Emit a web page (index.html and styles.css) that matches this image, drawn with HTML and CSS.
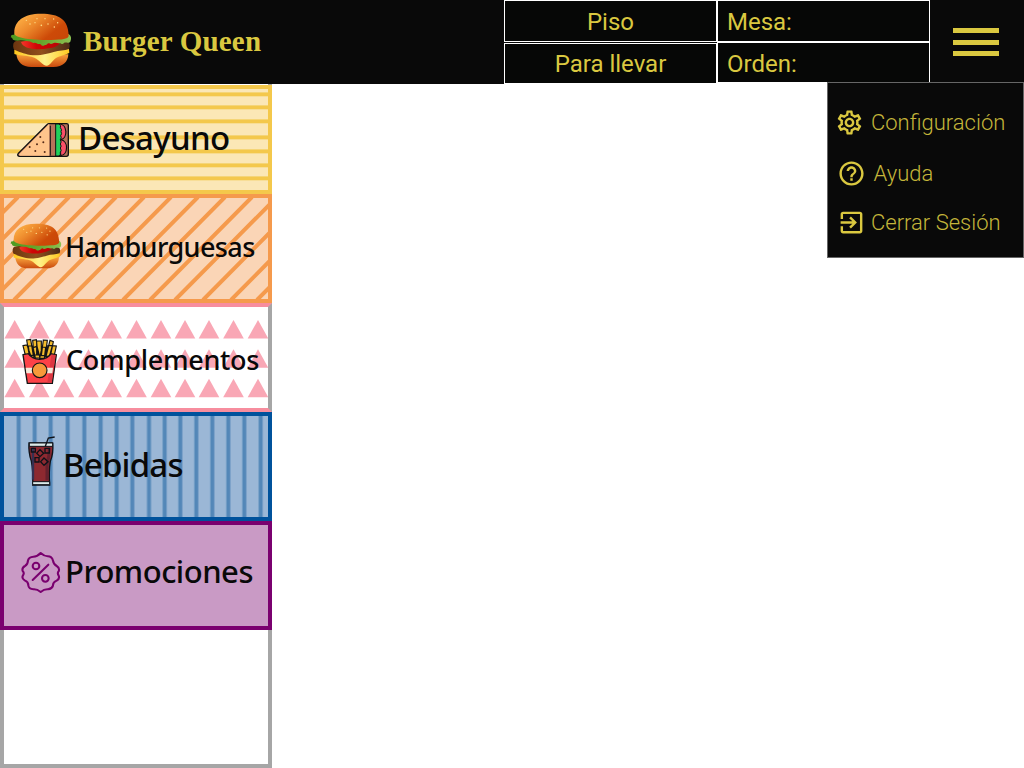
FILE: index.html
```html
<!DOCTYPE html>
<html lang="es">
<head>
<meta charset="utf-8">
<title>Burger Queen</title>
<link rel="stylesheet" href="styles.css">
</head>
<body>
<svg class="defs" width="0" height="0" aria-hidden="true">
  <defs>
    <linearGradient id="bun" x1="0" y1="0.2" x2="1" y2="0.8"><stop offset="0" stop-color="#ffb347"/><stop offset=".35" stop-color="#ed8a2c"/><stop offset=".75" stop-color="#cd4a08"/><stop offset="1" stop-color="#c94708"/></linearGradient>
    <linearGradient id="base" x1="0" y1="0" x2="0" y2="1"><stop offset="0" stop-color="#f7a13c"/><stop offset="1" stop-color="#c94a0e"/></linearGradient>
    <linearGradient id="leaf" x1="0" y1="0" x2="1" y2="0"><stop offset="0" stop-color="#4c9a20"/><stop offset=".5" stop-color="#66a52c"/><stop offset="1" stop-color="#8cc152"/></linearGradient>
    <linearGradient id="meat" x1="0" y1="0" x2="1" y2="0"><stop offset="0" stop-color="#6b3510"/><stop offset=".5" stop-color="#91501c"/><stop offset="1" stop-color="#4d2b17"/></linearGradient>
    <linearGradient id="cheese" x1="0" y1="0" x2="1" y2="0"><stop offset="0" stop-color="#ffc61c"/><stop offset=".55" stop-color="#fff18a"/><stop offset="1" stop-color="#ffca20"/></linearGradient>
    <linearGradient id="tomato" x1="0" y1="0" x2="1" y2="0"><stop offset="0" stop-color="#f6362a"/><stop offset=".4" stop-color="#cf0606"/><stop offset="1" stop-color="#b90505"/></linearGradient>
    <symbol id="burger" viewBox="30 40 186 164">
      <path fill="url(#base)" d="M49 164h156c-1 22-15 38-45 38H94c-28 0-42-15-45-38z"/>
      <path fill="url(#meat)" d="M40 133c2-10 15-12 30-10h125c14 2 17 13 12 25-8 14-35 16-66 19-40 3-79 0-92-10-8-6-11-15-9-24z"/>
      <path fill="url(#cheese)" d="M43 150c14 6 26 11 48 16 28 4 55-5 70-9 17-6 32-4 46-9l1 11c-8 6-29 9-40 16-11 8-19 24-28 23-12-1-21-17-37-24-23-8-48-5-60-11z"/>
      <path fill="url(#tomato)" d="M63 127c28-9 95-9 115-1 4 9-12 17-33 20-22 5-41 3-55 0-14-2-24-10-27-19z"/>
      <path fill="url(#leaf)" d="M34 106l8-1 4-11 60 8 100 1c8 6 9 13 5 23-7 7-14 0-19 4-6 7-9-2-15 1-6-1-9-3-16-1-6 3-9 4-13 1-6-3-7 6-12 5-5 1-4 3-9 2-3 0-4-5-8-5-7 1-8-4-15-4-9 3-11-5-19-4-9 0-13-3-22-3-10 2-16 2-24-2l-3-6-4-1 2-5z"/>
      <path fill="url(#bun)" d="M43 99c0-35 28-57 80-57 56 0 81 18 83 64 1 10-12 14-39 14-33 2-81 1-110-8-10-3-14-7-14-13z"/>
      <g fill="#ffe08a"><circle cx="79" cy="62" r="2"/><circle cx="90" cy="73" r="2.3"/><circle cx="111" cy="57" r="2"/><circle cx="105" cy="69" r="2"/><circle cx="124" cy="77" r="2.5"/><circle cx="135" cy="57" r="2"/><circle cx="144" cy="73" r="2.2"/><circle cx="161" cy="58" r="2"/><circle cx="173" cy="69" r="2.2"/><circle cx="163" cy="82" r="2.4"/></g>
    </symbol>
  </defs>
</svg>

<header class="topbar">
  <div class="brand">
    <svg class="brand-logo"><use href="#burger"/></svg>
    <h1 class="brand-name">Burger Queen</h1>
  </div>
  <div class="order">
    <div class="order-col modes">
      <div class="cell">Piso</div>
      <div class="cell">Para llevar</div>
    </div>
    <div class="order-col info">
      <div class="cell">Mesa:</div>
      <div class="cell">Orden:</div>
    </div>
  </div>
  <button class="burger-btn" aria-label="Menú"><i></i><i></i><i></i></button>
</header>

<main class="page">
  <nav class="sidebar">
    <a class="card breakfast">
      <svg class="pattern" viewBox="4 89 264 101">
        <g fill="#f5d577"><rect x="4" y="92" width="264" height="4.5"/><rect x="4" y="105" width="264" height="4.5"/><rect x="4" y="119" width="264" height="4.5"/><rect x="4" y="135" width="264" height="4.6"/><rect x="4" y="149" width="264" height="4.6"/><rect x="4" y="163" width="264" height="4.5"/><rect x="4" y="176" width="264" height="4.5"/></g>
        <g fill="#f4c84b"><rect x="4" y="93" width="264" height="3"/><rect x="4" y="106" width="264" height="3"/><rect x="4" y="120" width="264" height="3"/><rect x="4" y="136" width="264" height="3"/><rect x="4" y="150" width="264" height="3"/><rect x="4" y="164" width="264" height="3"/><rect x="4" y="177" width="264" height="3"/></g>
      </svg>
      <svg class="icon" viewBox="48 126 162 108">
        <path d="M146 131h54q5 0 5 5v87q0 6-6 6H58q-8-2-3-9l85-85q3-4 6-4z" fill="#b5735a" stroke="#111" stroke-width="4"/>
        <path d="M148 133v94H60q-5-1-2-5l84-85q3-4 6-4z" fill="#ffc58c"/>
        <path d="M151 137v90" stroke="#111" stroke-width="3"/>
        <path d="M178 132c25 1 26 43 4 47 24 3 23 45 0 48z" fill="#f94f68" stroke="#111" stroke-width="3.5"/>
        <path d="M167 132h10q8 5 4 11 6 6 2 12 4 6-1 12 4 6-1 12 5 7 0 13 5 7 0 12 5 8 0 13 2 7-4 11h-10z" fill="#1fd05c" stroke="#111" stroke-width="3"/>
        <g fill="#542b18"><circle cx="121" cy="171" r="3"/><circle cx="130" cy="187" r="3"/><circle cx="111" cy="193" r="3"/><circle cx="89" cy="201" r="3"/><circle cx="106" cy="213" r="3"/><circle cx="134" cy="216" r="3"/></g>
      </svg>
      <span class="label">Desayuno</span>
    </a>

    <a class="card burgers">
      <svg class="pattern" viewBox="4 198 264 101">
        <path fill="none" stroke="#f59a4c" stroke-width="4" d="M-84 300l102-103M-58 300l102-103M-33 300l102-103M-8 300l102-103M14 300l102-103M42 300l102-103M69 300l102-103M96 300l102-103M123 300l102-103M150 300l102-103M175 300l102-103M203 300l102-103M231 300l102-103M257 300l102-103"/>
      </svg>
      <svg class="icon"><use href="#burger"/></svg>
      <span class="label">Hamburguesas</span>
    </a>

    <a class="card sides">
      <svg class="pattern" viewBox="4 307 264 101">
        <defs><path id="tri" d="M0 0l10.3 18.5h-20.6z"/>
        <g id="row"><use href="#tri" x="14.7"/><use href="#tri" x="39.3"/><use href="#tri" x="64"/><use href="#tri" x="88.5"/><use href="#tri" x="111.7"/><use href="#tri" x="136.5"/><use href="#tri" x="161"/><use href="#tri" x="185"/><use href="#tri" x="209"/><use href="#tri" x="233.5"/><use href="#tri" x="258"/></g></defs>
        <g fill="#f9a7b5"><use href="#row" y="320"/><use href="#row" y="349.3"/><use href="#row" y="378.7"/></g>
      </svg>
      <svg class="icon" viewBox="63 114 111 141">
        <g fill="#f5bd2d" stroke="#151515" stroke-width="3.5">
          <path d="M69 137l12-2 12 34H77zM157 137l12 1-7 32h-14zM80 120l12-2 8 48H88zM150 121l10 4-9 44h-13zM98 121l11-2 5 46h-12zM130 120l12 1-6 46h-12zM110 123h14v42h-14zM85 138h12l5 36H90zM144 137h13l-8 34h-13zM99 143l12-4 9 35h-14zM126 141l11 1-4 33h-14z"/>
        </g>
        <path d="M69 164l16-3q10 16 34 17 25-1 34-17l16 3-12 86H82z" fill="#fd4248" stroke="#151515" stroke-width="4"/>
        <path d="M154 166l13-2-12 84h-13z" fill="#dc3742"/>
        <path d="M77 203h82l-2 17H79z" fill="#f3e8d9"/>
        <circle cx="119" cy="211" r="22" fill="#f7993a" stroke="#151515" stroke-width="3.5"/>
      </svg>
      <span class="label">Complementos</span>
    </a>

    <a class="card drinks">
      <svg class="pattern" viewBox="12 33 792 303" preserveAspectRatio="none">
        <path stroke="#78a0c8" stroke-width="15" d="M56 0v400M104 0v400M152 0v400M203 0v400M253 0v400M302 0v400M350 0v400M397 0v400M447 0v400M494 0v400M541 0v400M589 0v400M637 0v400M685 0v400M733 0v400M782 0v400"/>
        <path stroke="#5387b8" stroke-width="9" d="M56 0v400M104 0v400M152 0v400M203 0v400M253 0v400M302 0v400M350 0v400M397 0v400M447 0v400M494 0v400M541 0v400M589 0v400M637 0v400M685 0v400M733 0v400M782 0v400"/>
      </svg>
      <svg class="icon" viewBox="81 93 84 153">
        <path d="M87 114h71q3 30-7 55-5 30-2 71H98q2-42-4-72-9-25-7-54z" fill="#8d2930" stroke="#0e1219" stroke-width="4"/>
        <path d="M88 114h70v10H88zM98 230h51v9H98z" fill="#dceae9" stroke="#0e1219" stroke-width="3"/>
        <path d="M99 128v96" stroke="#353052" stroke-width="7"/><path d="M148 128q0 27-7 50v48" stroke="#65202d" stroke-width="9" fill="none"/>
        <path d="M136 124l9-25 19-3M94 130h12v11H94zM135 130h13v14h-13zM120 134l11 11-11 10-10-10zM132 159l12 11-12 11-10-11zM105 158h12v13h-12z" fill="none" stroke="#0e1219" stroke-width="4"/>
      </svg>
      <span class="label">Bebidas</span>
    </a>

    <a class="card promos">
      <svg class="icon" viewBox="60 108 123 129" fill="none" stroke="#7a006f" stroke-width="6.2" stroke-linecap="round" stroke-linejoin="round">
        <path d="M122 114q11 10 21 10c9 0 14 4 16 13q1 10 11 16 10 6 6 16-5 5 0 13 4 9-6 15-12 5-11 15-3 10-15 11-11-1-22 8-11-9-22-8-13-1-15-11 1-11-11-16-10-6-5-15 5-7-1-13-3-10 7-15 9-5 9-17 3-10 16-11 12 0 22-11z"/>
        <circle cx="108" cy="153" r="10"/><circle cx="136" cy="190" r="10"/><path d="M98 195l47-46"/>
      </svg>
      <span class="label">Promociones</span>
    </a>
  </nav>

  <div class="menu">
    <a class="menu-item config">
      <svg viewBox="0 0 24 24"><path d="M19.43 12.98c.04-.32.07-.64.07-.98 0-.34-.03-.66-.07-.98l2.11-1.65c.19-.15.24-.42.12-.64l-2-3.46c-.09-.16-.26-.25-.44-.25-.06 0-.12.01-.17.03l-2.49 1c-.52-.4-1.08-.73-1.69-.98l-.38-2.65C14.46 2.18 14.25 2 14 2h-4c-.25 0-.46.18-.49.42l-.38 2.65c-.61.25-1.17.59-1.69.98l-2.49-1c-.06-.02-.12-.03-.18-.03-.17 0-.34.09-.43.25l-2 3.46c-.13.22-.07.49.12.64l2.11 1.65c-.04.32-.07.65-.07.98 0 .33.03.66.07.98l-2.11 1.65c-.19.15-.24.42-.12.64l2 3.46c.09.16.26.25.44.25.06 0 .12-.01.17-.03l2.49-1c.52.4 1.08.73 1.69.98l.38 2.65c.03.24.24.42.49.42h4c.25 0 .46-.18.49-.42l.38-2.65c.61-.25 1.17-.59 1.69-.98l2.49 1c.06.02.12.03.18.03.17 0 .34-.09.43-.25l2-3.46c.12-.22.07-.49-.12-.64l-2.11-1.65zm-1.98-1.71c.04.31.05.52.05.73 0 .21-.02.43-.05.73l-.14 1.13.89.7 1.08.84-.7 1.21-1.27-.51-1.04-.42-.9.68c-.43.32-.84.56-1.25.73l-1.06.43-.16 1.13-.2 1.35h-1.4l-.19-1.35-.16-1.13-1.06-.43c-.43-.18-.83-.41-1.23-.71l-.91-.7-1.06.43-1.27.51-.7-1.21 1.08-.84.89-.7-.14-1.13c-.03-.31-.05-.54-.05-.74s.02-.43.05-.73l.14-1.13-.89-.7-1.08-.84.7-1.21 1.27.51 1.04.42.9-.68c.43-.32.84-.56 1.25-.73l1.06-.43.16-1.13.2-1.35h1.39l.19 1.35.16 1.13 1.06.43c.43.18.83.41 1.23.71l.91.7 1.06-.43 1.27-.51.7 1.21-1.07.85-.89.7.14 1.13zM12 8c-2.21 0-4 1.79-4 4s1.79 4 4 4 4-1.79 4-4-1.79-4-4-4zm0 6c-1.1 0-2-.9-2-2s.9-2 2-2 2 .9 2 2-.9 2-2 2z"/></svg>
      <span>Configuración</span>
    </a>
    <a class="menu-item help">
      <svg viewBox="0 0 24 24"><path d="M11 18h2v-2h-2v2zm1-16C6.48 2 2 6.48 2 12s4.48 10 10 10 10-4.48 10-10S17.52 2 12 2zm0 18c-4.41 0-8-3.59-8-8s3.59-8 8-8 8 3.59 8 8-3.59 8-8 8zm0-14c-2.21 0-4 1.79-4 4h2c0-1.1.9-2 2-2s2 .9 2 2c0 2-3 1.75-3 5h2c0-2.25 3-2.5 3-5 0-2.21-1.79-4-4-4z"/></svg>
      <span>Ayuda</span>
    </a>
    <a class="menu-item logout">
      <svg viewBox="0 0 24 24"><path d="M10.09 15.59L11.5 17l5-5-5-5-1.41 1.41L12.67 11H3v2h9.67l-2.58 2.59zM19 3H5c-1.11 0-2 .9-2 2v4h2V5h14v14H5v-4H3v4c0 1.1.89 2 2 2h14c1.1 0 2-.9 2-2V5c0-1.1-.9-2-2-2z"/></svg>
      <span>Cerrar Sesión</span>
    </a>
  </div>
</main>
</body>
</html>
```
FILE: styles.css
```css
* { box-sizing: border-box; }
body { margin: 0; width: 1024px; height: 768px; overflow: hidden; background: #fff; font-family: Roboto, "Liberation Sans", sans-serif; }
.defs { position: absolute; }
svg { display: block; flex: none; }

.topbar { display: flex; height: 84px; background: #090909; color: #dac840; }
.brand { display: flex; width: 504px; padding: 13.3px 0 0 10px; }
.brand-logo { width: 62px; height: 54.7px; }
.brand-name { margin: 11px 0 0 11px; font: bold 29px/34px "Liberation Serif", serif; letter-spacing: 0.2px; white-space: nowrap; }

.order { display: flex; width: 426px; font-size: 24px; background: #fff; }
.order-col { display: flex; flex-direction: column; width: 213px; }
.cell { display: flex; align-items: center; padding-top: 2px; background: #060706; border: 1px solid #fff; }
.modes { background: #060706; gap: 1px; }
.modes .cell { justify-content: center; height: 42px; }
.modes .cell + .cell { height: 41px; padding-top: 0; }
.info .cell { height: 42px; padding-left: 9px; }
.info .cell + .cell { height: 41px; }

.burger-btn { display: flex; flex-direction: column; gap: 6.5px; width: 94px; padding: 28px 25px 0 23px; border: 0; background: none; }
.burger-btn i { display: block; width: 46px; height: 5px; background: #dac840; }

.page { position: relative; height: 684px; }
.sidebar { display: flex; flex-direction: column; width: 272px; height: 684px; padding-top: 1px; border: solid #a6a6a6; border-width: 0 4px 4px; }
.card { position: relative; display: flex; align-items: flex-start; height: 109px; margin: 0 -4px; border: 4px solid; }
.pattern { position: absolute; inset: 0; width: 264px; height: 101px; }
.icon, .label { position: relative; }
.label { color: #090909; font: 500 32px/40px "Noto Sans", "Open Sans", sans-serif; white-space: nowrap; }

.breakfast { background: #fbe7b6; border-color: #f4c84b; }
.breakfast .icon { width: 54px; height: 36px; margin: 33px 0 0 12px; }
.breakfast .label { margin: 29px 0 0 8px; font-size: 33px; letter-spacing: -0.7px; }

.burgers { background: #fad5b6; border-color: #f59a4c; }
.burgers .icon { width: 52px; height: 46px; margin: 24.5px 0 0 6px; }
.burgers .label { margin: 29px 0 0 3px; font-size: 27px; letter-spacing: -0.6px; }

.sides { background: #fff; border-color: #f78d9e #a6a6a6; }
.sides .icon { width: 37px; height: 47px; margin: 31px 0 0 17px; }
.sides .label { margin: 33px 0 0 8px; font-size: 27px; letter-spacing: -0.3px; }

.drinks { background: #9bb7d6; border-color: #00529c; }
.drinks .icon { width: 28px; height: 51px; margin: 20px 0 0 23px; }
.drinks .label { margin: 29px 0 0 8px; font-size: 33px; letter-spacing: -0.8px; }

.promos { background: #c99ac5; border-color: #7a006f; }
.promos .icon { width: 41px; height: 43px; margin: 26px 0 0 16px; }
.promos .label { margin: 26px 0 0 4px; font-size: 31px; letter-spacing: -0.5px; }

.menu { position: absolute; top: -2px; right: 0; display: flex; flex-direction: column; width: 197px; height: 176px; padding: 24px 0 0 8px; background: #090909; border: 1px solid #666; color: #dac840; }
.menu-item { display: flex; align-items: center; height: 30px; font-weight: 300; font-size: 22px; }
.menu-item svg { width: 29px; height: 29px; fill: #dac840; }
.menu-item span { opacity: 0.9; white-space: nowrap; }
.config svg { margin-left: -1px; }
.config span { margin-left: 7px; }
.help { margin-top: 21px; }
.help svg { margin-left: 1px; }
.help span { margin-left: 7.5px; }
.logout { margin-top: 19px; }
.logout svg { margin-left: 1px; }
.logout span { margin-left: 5px; }
```
